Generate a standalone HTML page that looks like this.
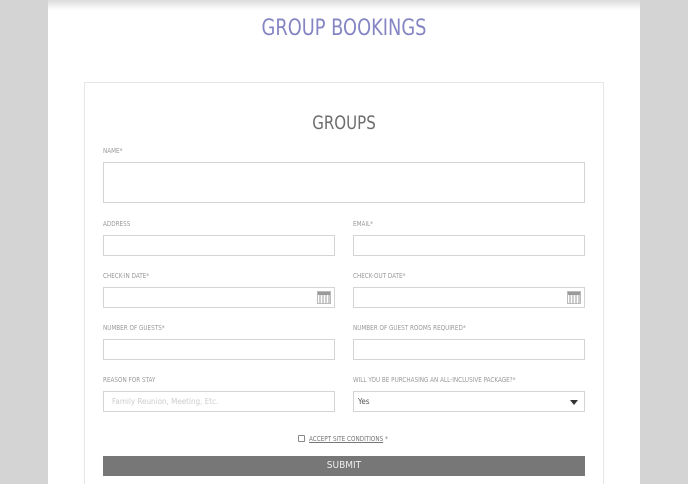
<!DOCTYPE html>
<html><head><style>
*{margin:0;padding:0;box-sizing:border-box}
html,body{width:688px;height:484px;overflow:hidden}
body{background:#d4d4d4;position:relative;font-family:"DejaVu Sans Condensed","Liberation Sans",sans-serif}
.panel{position:absolute;left:48px;top:0;width:592px;height:484px;background:#fff}
.shadow{position:absolute;left:48px;top:0;width:592px;height:10px;background:linear-gradient(#dcdcdc,#fff)}
.h1{position:absolute;left:0;width:688px;top:16px;text-align:center;font-size:22px;color:#8585c4;transform:scaleX(0.9)}
.card{position:absolute;left:84px;top:82px;width:520px;height:402px;border:1px solid #e6e6e6;border-bottom:none}
.h2{position:absolute;left:0;width:688px;top:112px;text-align:center;font-size:19px;color:#6e6e6e;transform:scaleX(0.88)}
.lab{position:absolute;font-size:7px;color:#9a9a9a;transform-origin:left;transform:scaleX(0.9);white-space:nowrap}
.in{position:absolute;border:1px solid #d4d4d4;background:#fff;font-size:8px;color:#555;padding-left:4px;line-height:19px}
.cal{position:absolute;right:3px;top:3px;width:14px;height:13px;border:1px solid #bbb;background:repeating-linear-gradient(90deg,#fff 0 1px,#ccc 1px 3px)}
.cal:before{content:"";position:absolute;left:0;right:0;top:0;height:3px;background:#999}
.btn{position:absolute;left:103px;top:456px;width:482px;height:20px;background:#777;color:#eee;font-size:10px;text-align:center;line-height:20px}
</style></head><body>
<div class="panel"></div><div class="shadow"></div>
<div class="h1">GROUP BOOKINGS</div>
<div class="card"></div>
<div class="h2">GROUPS</div>
<div class="lab" style="left:103px;top:147px">NAME*</div>
<div class="in" style="left:103px;top:162px;width:482px;height:41px"></div>
<div class="lab" style="left:103px;top:220px">ADDRESS</div>
<div class="in" style="left:103px;top:235px;width:232px;height:21px"></div>
<div class="lab" style="left:353px;top:220px">EMAIL*</div>
<div class="in" style="left:353px;top:235px;width:232px;height:21px"></div>
<div class="lab" style="left:103px;top:272px">CHECK-IN DATE*</div>
<div class="in" style="left:103px;top:287px;width:232px;height:21px"><div class="cal"></div></div>
<div class="lab" style="left:353px;top:272px">CHECK-OUT DATE*</div>
<div class="in" style="left:353px;top:287px;width:232px;height:21px"><div class="cal"></div></div>
<div class="lab" style="left:103px;top:324px">NUMBER OF GUESTS*</div>
<div class="in" style="left:103px;top:339px;width:232px;height:21px"></div>
<div class="lab" style="left:353px;top:324px">NUMBER OF GUEST ROOMS REQUIRED*</div>
<div class="in" style="left:353px;top:339px;width:232px;height:21px"></div>
<div class="lab" style="left:103px;top:376px">REASON FOR STAY</div>
<div class="in" style="left:103px;top:391px;width:232px;height:21px;color:#ccc;padding-left:8px">Family Reunion, Meeting, Etc.</div>
<div class="lab" style="left:353px;top:376px">WILL YOU BE PURCHASING AN ALL-INCLUSIVE PACKAGE?*</div>
<div class="in" style="left:353px;top:391px;width:232px;height:21px">Yes<span style="position:absolute;right:6px;top:8px;border-left:4px solid transparent;border-right:4px solid transparent;border-top:5px solid #333"></span></div>
<div style="position:absolute;left:298px;top:435px;width:7px;height:7px;border:1px solid #888;border-radius:1px"></div>
<div class="lab" style="left:309px;top:435px;color:#777"><u>ACCEPT SITE CONDITIONS</u> *</div>
<div class="btn">SUBMIT</div>
</body></html>
